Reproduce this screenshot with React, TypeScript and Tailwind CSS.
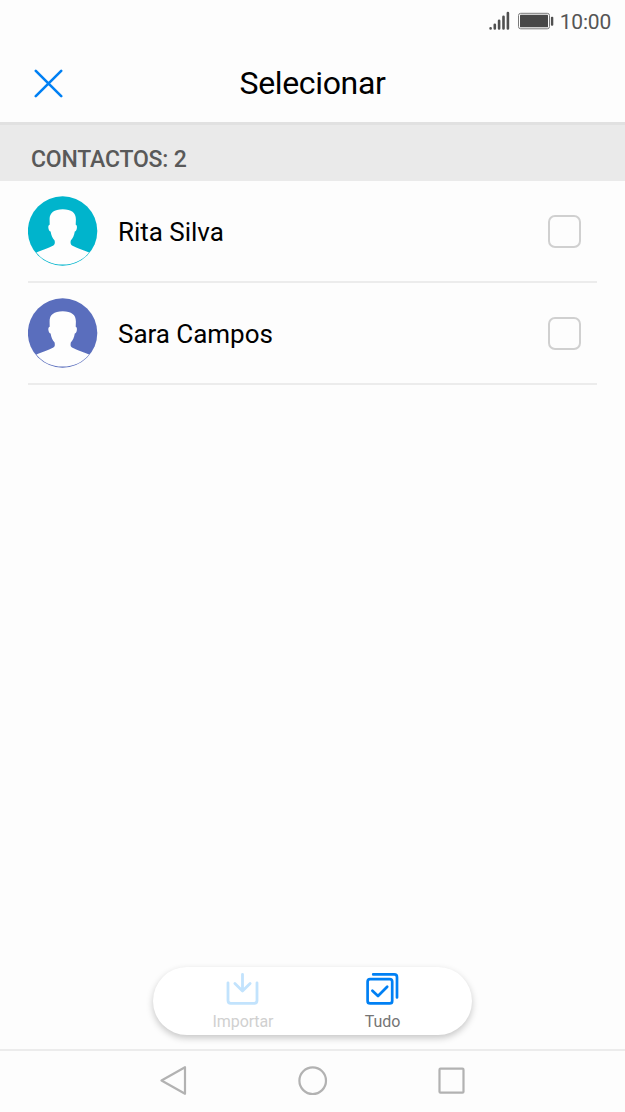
type Contact = {
  name: string;
  color: string;
};

const contacts: Contact[] = [
  { name: "Rita Silva", color: "#00b4cc" },
  { name: "Sara Campos", color: "#5a6ebd" },
];

const StatusBar = () => {
  return (
    <div className="flex h-[43px] items-center justify-end pt-px pr-[14px]">
      <svg width="66" height="22" viewBox="0 0 66 22" className="mr-[5px]" fill="none">
        <g stroke="#505050" strokeWidth="2.6" strokeLinecap="round">
          <path d="M1.6 17.3v.1M5.8 13.8V17.4M10.1 9.7V17.4M14.5 5.7V17.4M18.9 2.1V17.4" />
        </g>
        <rect x="29.5" y="2.3" width="31" height="15.5" rx="2.2" stroke="#7a7a7a" />
        <rect x="31" y="3.8" width="28" height="12.5" rx="0.5" fill="#484848" />
        <rect x="61.9" y="5.8" width="2.4" height="9" rx="1" fill="#505050" />
      </svg>
      <span className="text-[21px] leading-none tracking-[-0.2px] text-[#555]">10:00</span>
    </div>
  );
};

const Avatar = ({ color }: { color: string }) => {
  return (
    <svg width="70" height="70" viewBox="0 0 70 70" className="shrink-0">
      <circle cx="34.6" cy="35" r="34.7" fill={color} />
      <path
        fill="#fefefe"
        d="M34.7 13.3C43.5 13.3 48 17 47.9 23.5L47.7 28.7C49 28.8 49.2 31 48.7 33C48.3 34.7 47.7 35.4 46.8 35.4C46.2 39.5 44.8 42.3 42.8 44.5C42.4 46.5 42.4 48 43.4 49C45.4 51 55 53.6 61.1 56.5C54.8 64.1 46 68.6 34.6 68.6C23.5 68.6 14.5 64.1 8.4 56.5C14.5 53.6 24 51 26 49C27 48 27 46.5 26.6 44.5C24.6 42.3 23.2 39.5 22.6 35.4C21.6 35.4 21 34.7 20.6 33C20 31 20.3 28.8 21.7 28.7L21.6 23.5C21.4 17 26 13.3 34.7 13.3Z"
      />
    </svg>
  );
};

const ContactRow = ({ name, color }: Contact) => {
  return (
    <label className="mx-7 flex h-[102px] items-center border-b-2 border-[#ececec] pr-4">
      <Avatar color={color} />
      <span className="ml-5 flex-1 pt-0.5 text-[26px] leading-8 tracking-[-0.03px] text-black">{name}</span>
      <input
        type="checkbox"
        className="size-[33px] appearance-none rounded-[7px] border-2 border-[#d0d0d0]"
      />
    </label>
  );
};

const App = () => {
  return (
    <div className="flex h-[1112px] w-[625px] flex-col overflow-hidden bg-[#fdfdfd] font-['Roboto',sans-serif]">
      <StatusBar />

      <header className="grid h-[79px] grid-cols-[1fr_auto_1fr] items-center pt-px">
        <button aria-label="Fechar" className="ml-[34px] w-[29px]">
          <svg width="29" height="29" viewBox="0 0 29 29">
            <path d="M1.8 1.8L27.2 27.2M27.2 1.8L1.8 27.2" stroke="#0080f4" strokeWidth="2.6" strokeLinecap="round" />
          </svg>
        </button>
        <h1 className="text-[32px] leading-10 tracking-[-0.35px] text-black">Selecionar</h1>
      </header>

      <h2 className="h-[59px] border-t-3 border-[#e1e1e1] bg-[#eaeaea] pt-5 pl-[31px] text-[23px] leading-[30px] font-medium tracking-[-0.2px] text-[#595959]">
        CONTACTOS: 2
      </h2>

      <main className="flex-1">
        {contacts.map((contact) => (
          <ContactRow key={contact.name} {...contact} />
        ))}
      </main>

      <div className="mx-auto mb-[14px] flex h-[68px] w-[319px] rounded-full bg-white pl-5 shadow-[0_3px_7px_rgba(0,0,0,0.22)]">
        <button className="flex w-[140px] flex-col items-center pt-[5px] text-[#d0d0d0]">
          <svg width="34" height="34" viewBox="0 0 34 34" fill="none" stroke="#c2e3fd" strokeWidth="2.8" strokeLinecap="round" strokeLinejoin="round">
            <path d="M2 10.8V28.5Q2 31.3 4.8 31.3H28.2Q31 31.3 31 28.5V10.8" />
            <path d="M16.5 2.3V18.8M8.9 11.5L16.5 18.9L24.1 11.5" />
          </svg>
          <span className="mt-1.5 text-base leading-5 tracking-[-0.1px]">Importar</span>
        </button>
        <button className="flex w-[139px] flex-col items-center pt-[5px] text-[#757575]">
          <svg width="34" height="34" viewBox="0 0 34 34" fill="none" stroke="#0080f4" strokeWidth="2.7" strokeLinecap="round" strokeLinejoin="round">
            <rect x="1.6" y="7.2" width="24.6" height="24.2" rx="2.5" />
            <path d="M7.2 2.4H28.2Q31 2.4 31 5.2V25.5" />
            <path d="M6.4 18.7L12 24L21.2 14.7" />
          </svg>
          <span className="mt-1.5 text-base leading-5 tracking-[-0.1px]">Tudo</span>
        </button>
      </div>

      <nav className="flex h-[63px] items-center justify-center gap-[109px] border-t-2 border-[#ececec] pb-0.5">
        <svg width="30" height="30" viewBox="0 0 30 30" fill="none" stroke="#b2b2b2" strokeWidth="2.2" strokeLinejoin="round">
          <path d="M26 1.2V27.8L2.5 14.5Z" />
        </svg>
        <svg width="30" height="30" viewBox="0 0 30 30" fill="none" stroke="#b2b2b2" strokeWidth="2.2">
          <circle cx="14.7" cy="14.7" r="13.3" />
        </svg>
        <svg width="30" height="30" viewBox="0 0 30 30" fill="none" stroke="#b2b2b2" strokeWidth="2.2">
          <rect x="2.5" y="2.7" width="24" height="24" rx="1" />
        </svg>
      </nav>
    </div>
  );
};

export default App;
